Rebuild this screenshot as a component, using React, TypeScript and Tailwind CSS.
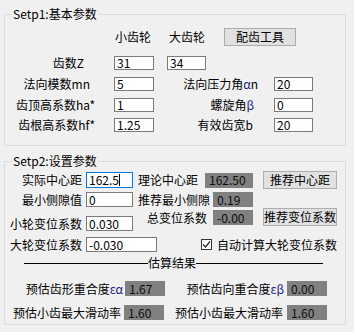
import React from "react"

function Box({ w, h = "h-[14px]", ml, children, focused }: { w: string; h?: string; ml: string; children?: React.ReactNode; focused?: boolean }) {
  return (
    <div
      className={`${w} ${h} ${ml} flex items-center bg-white border ${focused ? "border-[#0078d7]" : "border-[#7a7a7a]"} pl-[2px] leading-[12px]`}
    >
      {children}
    </div>
  )
}

function Gray({ ml, w = "w-[40px]", children }: { ml: string; w?: string; children: React.ReactNode }) {
  return <div className={`${w} h-[15px] ${ml} flex items-center bg-[#808080] pl-[4px] text-[#0c0c0c] leading-[12px]`}>{children}</div>
}

function Btn({ ml, w, children }: { ml: string; w: string; children: React.ReactNode }) {
  return (
    <div className={`${w} h-[18px] ${ml} flex items-center justify-center whitespace-nowrap bg-[#e1e1e1] border border-[#adadad] leading-[12px]`}>
      {children}
    </div>
  )
}

const G = ({ children }: { children: React.ReactNode }) => <span className="text-[#1c237c]">{children}</span>

export default function App() {
  return (
    <div className="w-[354px] h-[332px] bg-[#f0f0f0] pt-[6px] px-[4px] text-[12px] leading-[14px] whitespace-nowrap text-black font-['Noto_Sans_CJK_SC',sans-serif]">
      {/* Setp1 */}
      <fieldset className="w-[342px] h-[140px] border border-[#dcdcdc]">
        <legend className="ml-[7px] px-[1px] leading-[16px]">Setp1:基本参数</legend>
        <div className="flex flex-col">
          <div className="flex items-center h-[18px] mt-[6px]">
            <span className="ml-[110px]">小齿轮</span>
            <span className="ml-[18px]">大齿轮</span>
            <Btn ml="ml-[19px]" w="w-[72px]">配齿工具</Btn>
          </div>
          <div className="flex items-center h-[14px] mt-[10px]">
            <div className="w-[79px] text-right">齿数Z</div>
            <Box ml="ml-[30px]" w="w-[40px]">31</Box>
            <Box ml="ml-[13px]" w="w-[39px]">34</Box>
          </div>
          <div className="flex items-center h-[14px] mt-[7px]">
            <div className="w-[85px] text-right">法向模数mn</div>
            <Box ml="ml-[24px]" w="w-[40px]">5</Box>
            <div className="w-[104px] text-right">
              法向压力角<G>α</G>n
            </div>
            <Box ml="ml-[16px]" w="w-[39px]">20</Box>
          </div>
          <div className="flex items-center h-[14px] mt-[7px]">
            <div className="w-[90px] text-right">齿顶高系数ha*</div>
            <Box ml="ml-[19px]" w="w-[40px]">1</Box>
            <div className="w-[100px] text-right">
              螺旋角<G>β</G>
            </div>
            <Box ml="ml-[20px]" w="w-[39px]">0</Box>
          </div>
          <div className="flex items-center h-[14px] mt-[6px]">
            <div className="w-[90px] text-right">齿根高系数hf*</div>
            <Box ml="ml-[19px]" w="w-[40px]">1.25</Box>
            <div className="w-[99px] text-right">有效齿宽b</div>
            <Box ml="ml-[21px]" w="w-[39px]">20</Box>
          </div>
        </div>
      </fieldset>

      {/* Setp2 */}
      <fieldset className="w-[342px] h-[172px] mt-[7px] border border-[#dcdcdc]">
        <legend className="ml-[7px] px-[1px] leading-[16px]">Setp2:设置参数</legend>
        <div className="flex flex-col">
          <div className="flex items-center h-[18px] mt-[2px]">
            <div className="w-[77px] text-right">实际中心距</div>
            <Box ml="ml-[4px]" w="w-[47px]" h="h-[16px]" focused>
              162.5<span className="w-px h-[12px] bg-black" />
            </Box>
            <span className="ml-[5px]">理论中心距</span>
            <Gray ml="ml-[7px]" w="w-[48px]">162.50</Gray>
            <Btn ml="ml-[10px]" w="w-[74px]">推荐中心距</Btn>
          </div>
          <div className="flex items-center h-[15px] mt-[3px]">
            <div className="w-[77px] text-right">最小侧隙值</div>
            <Box ml="ml-[4px]" w="w-[47px]" h="h-[15px]">0</Box>
            <span className="ml-[5px]">推荐最小侧隙</span>
            <Gray ml="ml-[3px]">0.19</Gray>
          </div>
          <div className="flex items-start mt-[1px]">
            <div className="flex items-center h-[15px] mt-[8px]">
              <div className="w-[77px] text-right">小轮变位系数</div>
              <Box ml="ml-[4px]" w="w-[47px]" h="h-[15px]">0.030</Box>
            </div>
            <div className="flex items-center h-[15px] mt-[2px]">
              <span className="ml-[14px]">总变位系数</span>
              <Gray ml="ml-[6px]">-0.00</Gray>
            </div>
            <Btn ml="ml-[10px]" w="w-[74px]">推荐变位系数</Btn>
          </div>
          <div className="flex items-center h-[15px] mt-[6px]">
            <div className="w-[77px] text-right">大轮变位系数</div>
            <Box ml="ml-[4px]" w="w-[71px]" h="h-[15px]">-0.030</Box>
            <span className="ml-[44px] w-[11px] h-[11px] border border-[#333] bg-white flex items-center justify-center">
              <svg width="9" height="9" viewBox="0 0 9 9" fill="none" stroke="#222" strokeWidth="1.2">
                <path d="M1 4.5 L3.5 7 L8 1.5" />
              </svg>
            </span>
            <span className="ml-[5px]">自动计算大轮变位系数</span>
          </div>
          <div className="flex items-center h-[14px] mt-[4px]">
            <div className="ml-[19px] w-[124px] h-px bg-black" />
            <span>估算结果</span>
            <div className="w-[127px] h-px bg-black" />
          </div>
          <div className="flex items-center h-[15px] mt-[11px]">
            <div className="w-[118px] text-right">
              预估齿形重合度<G>εα</G>
            </div>
            <Gray ml="ml-[2px]">1.67</Gray>
            <div className="w-[119px] text-right">
              预估齿向重合度<G>εβ</G>
            </div>
            <Gray ml="ml-[3px]">0.00</Gray>
          </div>
          <div className="flex items-center h-[15px] mt-[9px]">
            <div className="w-[116px] text-right">预估小齿最大滑动率</div>
            <Gray ml="ml-[3px]">1.60</Gray>
            <div className="w-[119px] text-right">预估小齿最大滑动率</div>
            <Gray ml="ml-[4px]">1.60</Gray>
          </div>
        </div>
      </fieldset>
    </div>
  )
}
